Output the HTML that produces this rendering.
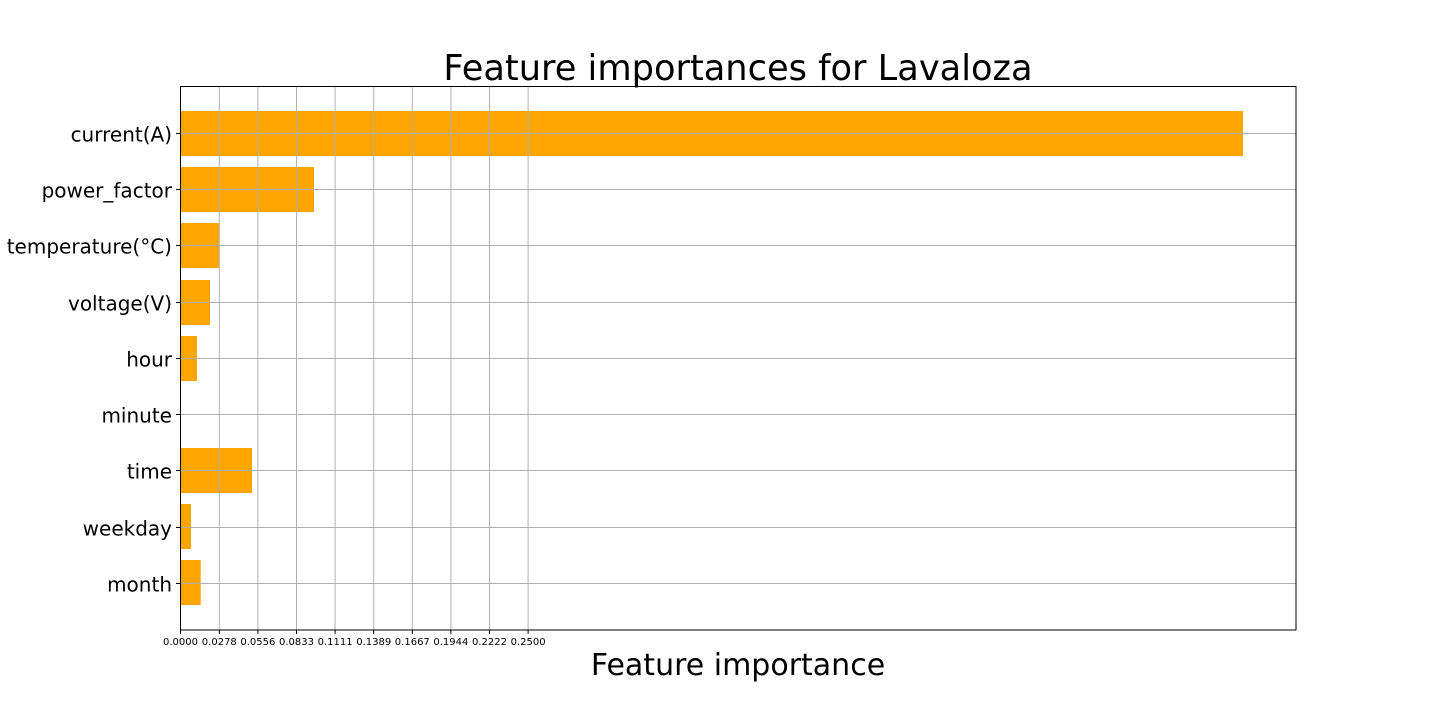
<!DOCTYPE html>
<html><head><style>html,body{margin:0;padding:0;background:#fff;}svg{display:block}</style></head>
<body>
<svg width="1440" height="720" xmlns="http://www.w3.org/2000/svg" font-family="DejaVu Sans, Liberation Sans, sans-serif">
<rect width="1440" height="720" fill="#fff"/>
<text x="738" y="80" font-size="35.2" text-anchor="middle" fill="#000">Feature importances for Lavaloza</text>
<g fill="#ffa500">
<rect x="180" y="111" width="1063" height="45"/>
<rect x="180" y="167" width="134" height="45"/>
<rect x="180" y="223" width="39.5" height="45"/>
<rect x="180" y="280" width="30" height="45"/>
<rect x="180" y="336" width="17" height="45"/>
<rect x="180" y="392" width="1" height="45"/>
<rect x="180" y="448" width="72" height="45"/>
<rect x="180" y="504" width="11" height="45"/>
<rect x="180" y="560" width="20.7" height="45"/>
</g>
<g stroke="#b0b0b0" stroke-width="1">
<line x1="219.3" y1="86" x2="219.3" y2="630"/><line x1="257.9" y1="86" x2="257.9" y2="630"/>
<line x1="296.5" y1="86" x2="296.5" y2="630"/><line x1="335.1" y1="86" x2="335.1" y2="630"/>
<line x1="373.7" y1="86" x2="373.7" y2="630"/><line x1="412.3" y1="86" x2="412.3" y2="630"/>
<line x1="450.9" y1="86" x2="450.9" y2="630"/><line x1="489.5" y1="86" x2="489.5" y2="630"/>
<line x1="528.1" y1="86" x2="528.1" y2="630"/>
<line x1="180" y1="133.5" x2="1296" y2="133.5"/><line x1="180" y1="189.5" x2="1296" y2="189.5"/>
<line x1="180" y1="245.5" x2="1296" y2="245.5"/><line x1="180" y1="302.5" x2="1296" y2="302.5"/>
<line x1="180" y1="358.5" x2="1296" y2="358.5"/><line x1="180" y1="414.5" x2="1296" y2="414.5"/>
<line x1="180" y1="470.5" x2="1296" y2="470.5"/><line x1="180" y1="527.5" x2="1296" y2="527.5"/>
<line x1="180" y1="583.5" x2="1296" y2="583.5"/>
</g>
<rect x="180.5" y="86.5" width="1115.5" height="543.5" fill="none" stroke="#000" stroke-width="1"/>
<g stroke="#000" stroke-width="1">
<line x1="176" y1="133.5" x2="180" y2="133.5"/><line x1="176" y1="189.5" x2="180" y2="189.5"/>
<line x1="176" y1="245.5" x2="180" y2="245.5"/><line x1="176" y1="302.5" x2="180" y2="302.5"/>
<line x1="176" y1="358.5" x2="180" y2="358.5"/><line x1="176" y1="414.5" x2="180" y2="414.5"/>
<line x1="176" y1="470.5" x2="180" y2="470.5"/><line x1="176" y1="527.5" x2="180" y2="527.5"/>
<line x1="176" y1="583.5" x2="180" y2="583.5"/>
<line x1="180.5" y1="630" x2="180.5" y2="634"/><line x1="219.3" y1="630" x2="219.3" y2="634"/>
<line x1="257.9" y1="630" x2="257.9" y2="634"/><line x1="296.5" y1="630" x2="296.5" y2="634"/>
<line x1="335.1" y1="630" x2="335.1" y2="634"/><line x1="373.7" y1="630" x2="373.7" y2="634"/>
<line x1="412.3" y1="630" x2="412.3" y2="634"/><line x1="450.9" y1="630" x2="450.9" y2="634"/>
<line x1="489.5" y1="630" x2="489.5" y2="634"/><line x1="528.1" y1="630" x2="528.1" y2="634"/>
</g>
<g font-size="20" text-anchor="end" fill="#000">
<text x="172" y="141.5">current(A)</text><text x="172" y="197.5">power_factor</text>
<text x="172" y="253.5">temperature(°C)</text><text x="172" y="310.5">voltage(V)</text>
<text x="172" y="366.5">hour</text><text x="172" y="422.5">minute</text>
<text x="172" y="478.5">time</text><text x="172" y="535.5">weekday</text>
<text x="172" y="591.5">month</text>
</g>
<g font-size="10" text-anchor="middle" fill="#000">
<text x="180.5" y="645">0.0000</text><text x="219.3" y="645">0.0278</text>
<text x="257.9" y="645">0.0556</text><text x="296.5" y="645">0.0833</text>
<text x="335.1" y="645">0.1111</text><text x="373.7" y="645">0.1389</text>
<text x="412.3" y="645">0.1667</text><text x="450.9" y="645">0.1944</text>
<text x="489.5" y="645">0.2222</text><text x="528.1" y="645">0.2500</text>
</g>
<text x="738" y="675" font-size="30" text-anchor="middle" fill="#000">Feature importance</text>
</svg>
</body></html>
